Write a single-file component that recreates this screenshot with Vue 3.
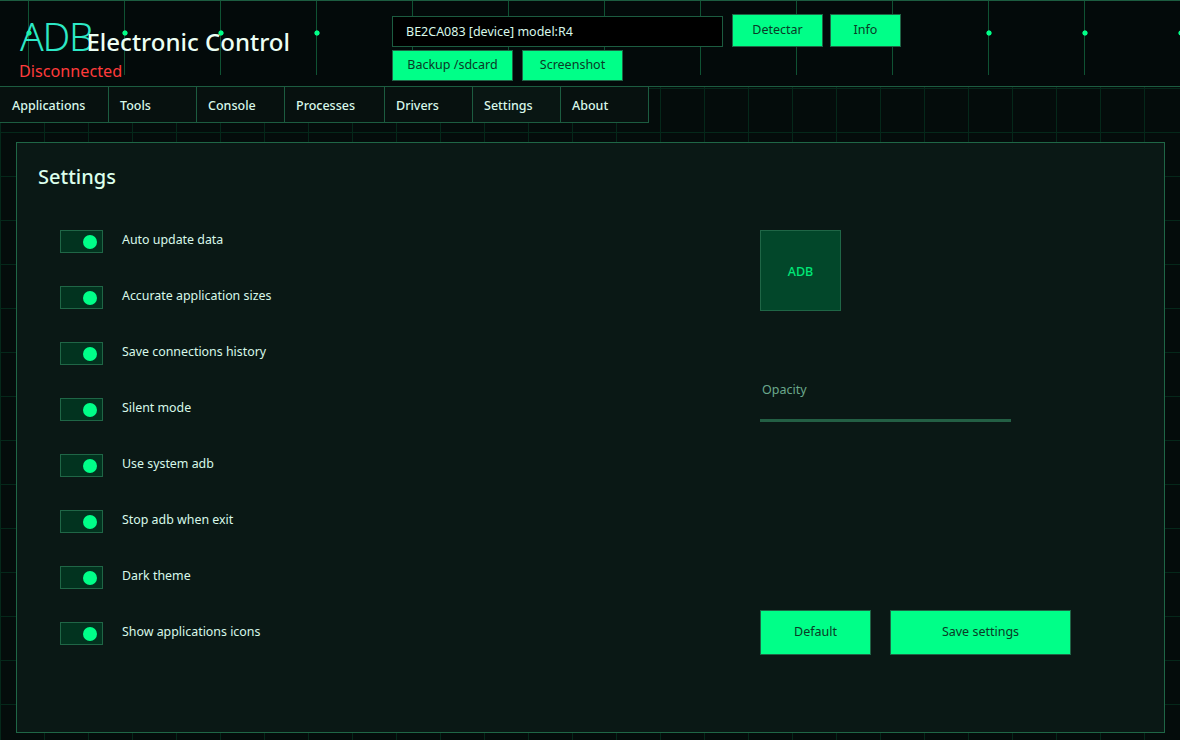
<script setup>
import { ref } from 'vue'

const tabs = ['Applications', 'Tools', 'Console', 'Processes', 'Drivers', 'Settings', 'About']
const tabWidths = [109, 88, 88, 100, 88, 88, 87]

const options = ref([
  { label: 'Auto update data', on: true },
  { label: 'Accurate application sizes', on: true },
  { label: 'Save connections history', on: true },
  { label: 'Silent mode', on: true },
  { label: 'Use system adb', on: true },
  { label: 'Stop adb when exit', on: true },
  { label: 'Dark theme', on: true },
  { label: 'Show applications icons', on: true }
])
</script>

<template>
  <div class="app">
    <header class="header">
      <div class="brand">
        <div class="brand-top">
          <span class="brand-adb">ADB</span>
          <span class="brand-name">Electronic Control</span>
        </div>
        <div class="status">Disconnected</div>
      </div>
      <div class="controls">
        <div class="control-row top">
          <div class="device">BE2CA083 [device] model:R4</div>
          <button class="btn detect">Detectar</button>
          <button class="btn info">Info</button>
        </div>
        <div class="control-row">
          <button class="btn backup">Backup /sdcard</button>
          <button class="btn shot">Screenshot</button>
        </div>
      </div>
    </header>

    <nav class="tabs">
      <div
        v-for="(tab, index) in tabs"
        :key="tab"
        class="tab"
        :class="{ active: tab === 'Settings' }"
        :style="{ width: tabWidths[index] + 'px' }"
      >{{ tab }}</div>
    </nav>

    <main class="panel">
      <h1 class="title">Settings</h1>
      <div class="columns">
        <ul class="options">
          <li v-for="opt in options" :key="opt.label" class="option">
            <span class="toggle" :class="{ off: !opt.on }" @click="opt.on = !opt.on">
              <span class="knob"></span>
            </span>
            <span class="option-label">{{ opt.label }}</span>
          </li>
        </ul>
        <div class="side">
          <div class="logo-tile">ADB</div>
          <div class="opacity-label">Opacity</div>
          <div class="slider"></div>
          <div class="actions">
            <button class="btn default">Default</button>
            <button class="btn save">Save settings</button>
          </div>
        </div>
      </div>
    </main>
  </div>
</template>

<style>
html, body {
  margin: 0;
  background: #040c0b;
}
</style>

<style scoped>
.app {
  width: 1180px;
  height: 740px;
  overflow: hidden;
  box-sizing: border-box;
  font-family: "Noto Sans", "Open Sans", sans-serif;
  background-color: #040c0b;
  background-image:
    linear-gradient(to right, #05281a 1px, transparent 1px),
    linear-gradient(to bottom, #05281a 1px, transparent 1px);
  background-size: 44px 44px;
}

.header {
  box-sizing: border-box;
  height: 87px;
  display: flex;
  border-top: 1px solid #1c5c40;
  border-bottom: 1px solid #1c5c40;
  background-color: #030a0a;
  background-image:
    radial-gradient(circle at 3px 32px, #00ff88 0, #00ff88 2.2px, transparent 3px),
    linear-gradient(to right, #0f5233 1px, transparent 1px);
  background-size: 96px 75px, 96px 74px;
  background-position: 26px 0, 28px 0;
  background-repeat: repeat-x;
}

.brand {
  width: 392px;
  padding: 13px 0 0 20px;
  box-sizing: border-box;
}

.brand-top {
  display: flex;
  align-items: baseline;
  height: 46px;
}

.brand-adb {
  font-size: 39px;
  font-weight: 300;
  line-height: 44px;
  color: #2de8c6;
  letter-spacing: -1.2px;
  margin-right: -6px;
}

.brand-name {
  font-size: 24px;
  font-weight: 500;
  color: #ecfff4;
}

.status {
  font-size: 16.2px;
  font-weight: 400;
  line-height: 22px;
  color: #ff3b3b;
  margin-left: -1px;
}

.controls {
  padding-top: 13px;
}

.control-row {
  display: flex;
  gap: 9px;
  margin-bottom: 3px;
}

.control-row.top {
  align-items: flex-end;
}

.device {
  box-sizing: border-box;
  width: 331px;
  height: 31px;
  padding-left: 13px;
  border: 1px solid #1c5c40;
  background: #000;
  color: #d8f8ea;
  font-size: 12.5px;
  line-height: 29px;
}

.btn {
  box-sizing: border-box;
  padding: 0 0 2px;
  border: 1px solid #1f6646;
  background: #00ff88;
  color: #0a3a26;
  font-family: inherit;
  font-size: 12.5px;
  cursor: pointer;
}

.detect {
  width: 91px;
  height: 33px;
}

.info {
  width: 71px;
  height: 33px;
  margin-left: -2px;
}

.backup {
  width: 121px;
  height: 31px;
}

.shot {
  width: 101px;
  height: 31px;
}

.tabs {
  display: flex;
  width: 649px;
  height: 36px;
  box-sizing: border-box;
  border-bottom: 1px solid #1c5c40;
  border-right: 1px solid #1c5c40;
  background: #07110f;
}

.tab {
  flex: none;
  box-sizing: border-box;
  padding-left: 11px;
  border-right: 1px solid #1c5c40;
  color: #d8f8ea;
  font-size: 12.5px;
  font-weight: 500;
  line-height: 37px;
}

.tab:first-child {
  padding-left: 12px;
}

.tab:last-child {
  border-right: none;
}

.tab.active {
  background: #091613;
}

.panel {
  box-sizing: border-box;
  width: 1149px;
  height: 591px;
  margin: 19px 0 0 16px;
  padding: 19px 21px;
  border: 1px solid #1f6646;
  background: #0a1815;
}

.title {
  margin: 0;
  font-size: 20px;
  font-weight: 500;
  line-height: 30px;
  color: #dcffec;
}

.columns {
  display: flex;
  margin-top: 38px;
}

.options {
  width: 722px;
  margin: 0;
  padding: 0 0 0 22px;
  box-sizing: border-box;
  list-style: none;
  display: flex;
  flex-direction: column;
  gap: 33px;
}

.option {
  display: flex;
  height: 23px;
  gap: 19px;
}

.toggle {
  box-sizing: border-box;
  width: 43px;
  height: 23px;
  display: flex;
  align-items: center;
  justify-content: flex-end;
  padding-right: 5px;
  border: 1px solid #1f6646;
  background: #02331f;
  cursor: pointer;
}

.toggle.off {
  justify-content: flex-start;
  padding-left: 5px;
}

.knob {
  width: 14px;
  height: 14px;
  border-radius: 50%;
  background: #00ff88;
}

.option-label {
  font-size: 12.4px;
  line-height: 20px;
  color: #d8f8ea;
}

.side {
  flex: 1;
}

.logo-tile {
  box-sizing: border-box;
  width: 81px;
  height: 81px;
  padding-top: 2px;
  display: flex;
  align-items: center;
  justify-content: center;
  border: 1px solid #1f6646;
  background: #02472a;
  color: #00e878;
  font-size: 12.5px;
  font-weight: 500;
}

.opacity-label {
  margin: 69px 0 0 2px;
  font-size: 12.5px;
  line-height: 20px;
  color: #6aa88c;
}

.slider {
  width: 251px;
  height: 3px;
  margin-top: 19px;
  background: #235f44;
}

.actions {
  display: flex;
  gap: 19px;
  margin-top: 188px;
}

.default {
  width: 111px;
  height: 45px;
}

.save {
  width: 181px;
  height: 45px;
}
</style>
